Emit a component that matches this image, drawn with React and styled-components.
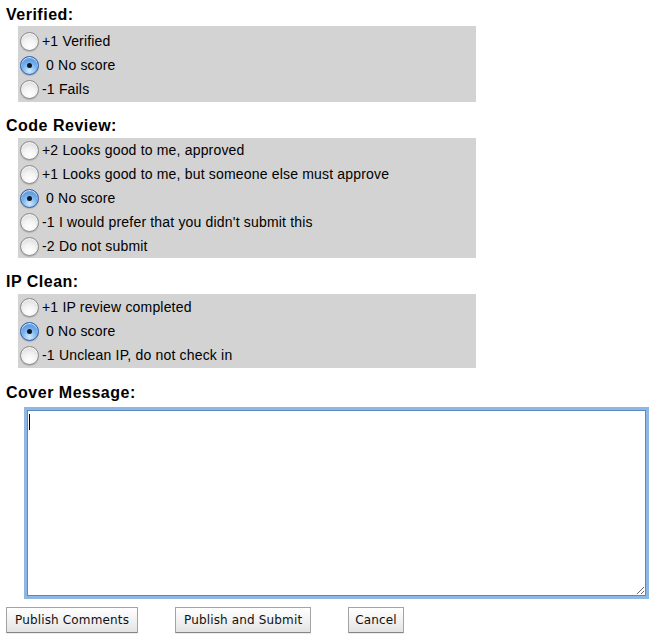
import React from 'react'
import styled, { createGlobalStyle } from 'styled-components'

const GlobalStyle = createGlobalStyle`
  html, body {
    margin: 0;
    padding: 0;
    background: #ffffff;
  }
  body {
    font-family: 'Liberation Sans', Arial, Helvetica, sans-serif;
    color: #000000;
  }
`

const Page = styled.form`
  display: flex;
  flex-direction: column;
  padding: 5px 6px 10px;
  width: 662px;
  box-sizing: border-box;
`

const Section = styled.div`
  display: flex;
  flex-direction: column;
  margin-bottom: ${(p) => p.gap || 14}px;
`

const Heading = styled.div`
  font-size: 16px;
  font-weight: bold;
  line-height: 20px;
  letter-spacing: 0.5px;
  margin-bottom: ${(p) => p.below || 1}px;
`

const ScoreBox = styled.div`
  margin-left: 12px;
  width: 458px;
  background: #d3d3d3;
  padding: ${(p) => p.pad || '1px 0'};
  display: flex;
  flex-direction: column;
`

const Row = styled.label`
  display: flex;
  align-items: center;
  height: 24px;
  font-size: 14px;
  letter-spacing: 0.18px;
  white-space: pre;
`

const Radio = styled.input.attrs({ type: 'radio' })`
  appearance: none;
  box-sizing: border-box;
  width: 19px;
  height: 19px;
  margin: 0 3px 0 2px;
  border-radius: 50%;
  border: 1px solid #8a8a8a;
  background: radial-gradient(circle at 50% 78%, #ffffff 0%, #f4f4f4 40%, #d2d2d2 100%);
  box-shadow: inset 0 1px 1px rgba(255, 255, 255, 0.9), 0 1px 1px rgba(0, 0, 0, 0.18);
  position: relative;
  flex: none;

  &:checked {
    border-color: #2a5ea6;
    background: radial-gradient(circle at 50% 82%, #d4ebfd 0%, #80b8ee 42%, #3b7fd2 100%);
  }
  &:checked::after {
    content: '';
    position: absolute;
    left: 50%;
    top: 50%;
    width: 5px;
    height: 5px;
    margin: -2.5px 0 0 -2.5px;
    border-radius: 50%;
    background: #0f1828;
  }
`

const EditorWrap = styled.div`
  position: relative;
  margin: 6px 0 0 21px;
  width: 619px;
  height: 186px;
`

const Editor = styled.textarea`
  box-sizing: border-box;
  width: 100%;
  height: 100%;
  margin: 0;
  border: 1px solid #5a8ac4;
  outline: none;
  box-shadow: 0 0 0 3px rgba(122, 170, 222, 0.85);
  caret-color: transparent;
  font-family: 'Liberation Mono', monospace;
  font-size: 13px;
`

const Caret = styled.span`
  position: absolute;
  left: 2px;
  top: 4px;
  width: 1px;
  height: 16px;
  background: #000000;
`

const Buttons = styled.div`
  display: flex;
  gap: 37px;
  margin-top: 11px;
`

const Button = styled.button`
  height: 26px;
  padding: 0 ${(p) => (p.narrow ? 6 : 8)}px;
  font-family: 'DejaVu Sans', 'Lucida Grande', sans-serif;
  font-size: 12px;
  letter-spacing: 0.15px;
  color: #111111;
  background: linear-gradient(#ffffff, #f2f2f2 50%, #e3e3e3);
  border: 1px solid #a3a3a3;
  border-bottom-color: #858585;
  border-radius: 1px;
  box-shadow: 0 1px 0 rgba(0, 0, 0, 0.08);
`

const categories = [
  {
    name: 'Verified:',
    options: ['+1 Verified', ' 0 No score', '-1 Fails'],
    checked: 1,
    pad: '3px 0 1px',
  },
  {
    name: 'Code Review:',
    options: [
      '+2 Looks good to me, approved',
      '+1 Looks good to me, but someone else must approve',
      ' 0 No score',
      "-1 I would prefer that you didn't submit this",
      '-2 Do not submit',
    ],
    checked: 2,
    below: 2,
    pad: '0',
  },
  {
    name: 'IP Clean:',
    options: ['+1 IP review completed', ' 0 No score', '-1 Unclean IP, do not check in'],
    checked: 1,
    below: 2,
    gap: 15,
  },
]

const App = () => {
  return (
    <>
      <GlobalStyle />
      <Page onSubmit={(e) => e.preventDefault()}>
        {categories.map((cat, cIdx) => (
          <Section key={`cat__${cIdx}`} gap={cat.gap}>
            <Heading below={cat.below}>{cat.name}</Heading>
            <ScoreBox pad={cat.pad}>
              {cat.options.map((opt, oIdx) => (
                <Row key={`opt__${oIdx}`}>
                  <Radio name={`cat${cIdx}`} defaultChecked={oIdx === cat.checked} />
                  {opt}
                </Row>
              ))}
            </ScoreBox>
          </Section>
        ))}
        <Heading>Cover Message:</Heading>
        <EditorWrap>
          <Editor />
          <Caret />
        </EditorWrap>
        <Buttons>
          <Button type="button">Publish Comments</Button>
          <Button type="button">Publish and Submit</Button>
          <Button type="button" narrow>Cancel</Button>
        </Buttons>
      </Page>
    </>
  )
}

export default App
